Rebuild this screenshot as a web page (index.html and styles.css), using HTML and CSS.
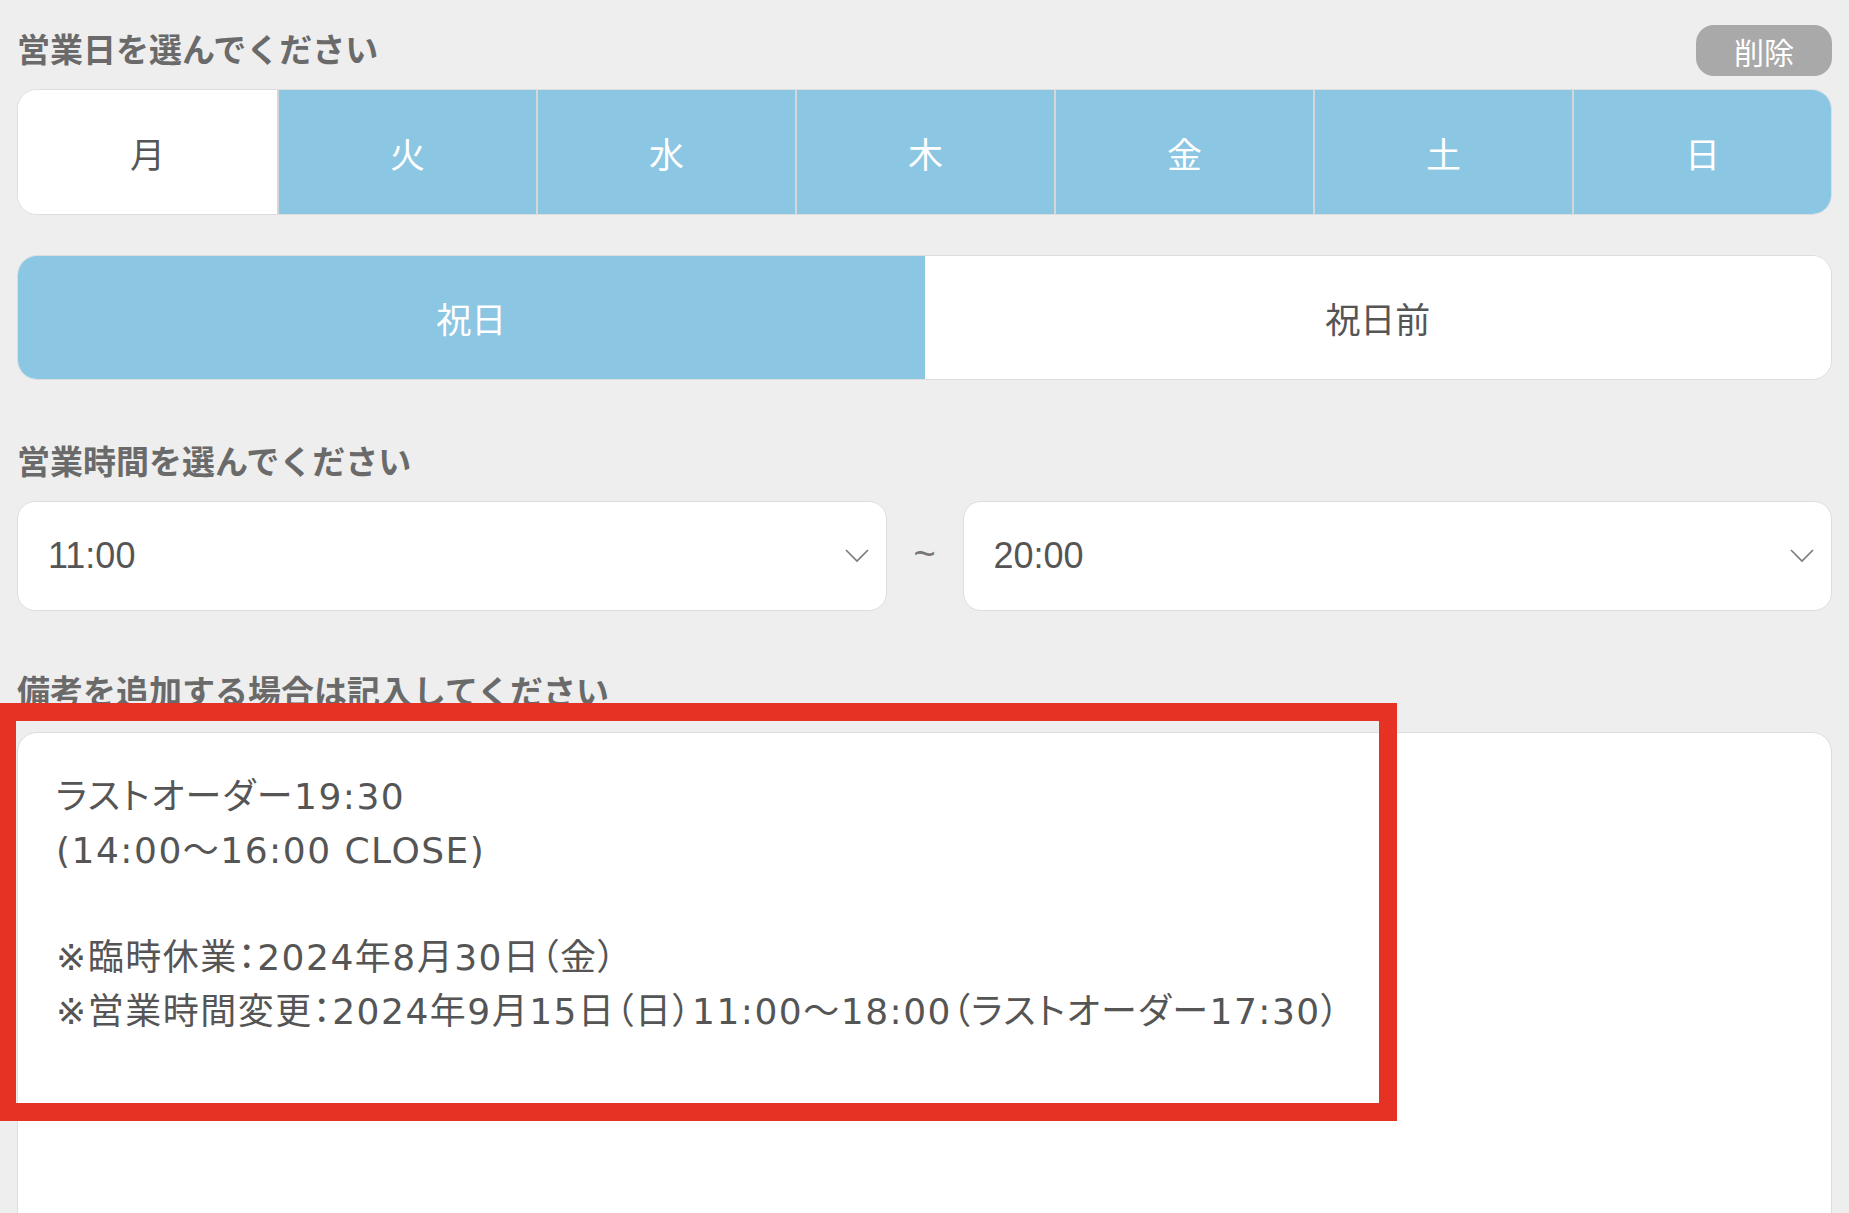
FILE: index.html
```html
<!DOCTYPE html>
<html lang="ja">
<head>
    <meta charset="UTF-8">
    <meta name="viewport" content="width=device-width, initial-scale=1.0">
    <title>営業日設定</title>
    <link rel="stylesheet" href="styles.css">
</head>
<body>
    <div class="page">
        <div class="head">
            <p class="label">営業日を選んでください</p>
            <div class="delete-btn">削除</div>
        </div>

        <div class="days">
            <div class="day">月</div>
            <div class="day on">火</div>
            <div class="day on">水</div>
            <div class="day on">木</div>
            <div class="day on">金</div>
            <div class="day on">土</div>
            <div class="day on">日</div>
        </div>

        <div class="holidays">
            <div class="day on">祝日</div>
            <div class="day">祝日前</div>
        </div>

        <p class="label label-time">営業時間を選んでください</p>
        <div class="times">
            <div class="select">
                <span>11:00</span>
                <svg class="chevron" width="24" height="14" viewBox="0 0 24 14"><polyline points="1,1 12,12 23,1" fill="none" stroke="#7a7a7a" stroke-width="1.6"/></svg>
            </div>
            <div class="tilde">~</div>
            <div class="select">
                <span>20:00</span>
                <svg class="chevron" width="24" height="14" viewBox="0 0 24 14"><polyline points="1,1 12,12 23,1" fill="none" stroke="#7a7a7a" stroke-width="1.6"/></svg>
            </div>
        </div>

        <p class="label label-note">備考を追加する場合は記入してください</p>
        <div class="note">
            <p>ラストオーダー19:30</p>
            <p>(14:00～16:00 CLOSE)</p>
            <p>&nbsp;</p>
            <p>※臨時休業：2024年8月30日（金）</p>
            <p>※営業時間変更：2024年9月15日（日）11:00～18:00（ラストオーダー17:30）</p>
        </div>

        <!-- 注釈の赤枠 -->
        <div class="mark"></div>
    </div>
</body>
</html>
```

FILE: styles.css
```css
body {
    margin: 0;
    background-color: #eeeeee;
    font-family: "Noto Sans CJK JP", "Noto Sans", sans-serif;
    color: #555555;
}

.page {
    position: relative;
    height: 1213px;
    overflow: hidden;
    padding: 25px 17px 0 17px;
    box-sizing: border-box;
}

p {
    margin: 0;
}

.head {
    display: flex;
    justify-content: space-between;
    align-items: flex-start;
    height: 51px;
}

.label {
    font-size: 33px;
    font-weight: bold;
    line-height: 40px;
    color: #6a6a6a;
}

.head .label {
    margin-top: 3px;
}

.delete-btn {
    width: 136px;
    height: 51px;
    border-radius: 18px;
    background-color: #a9a9a9;
    color: #ffffff;
    font-size: 30px;
    display: flex;
    justify-content: center;
    align-items: center;
}

.days, .holidays {
    display: grid;
    border: 1px solid #dddddd;
    border-radius: 20px;
    overflow: hidden;
    background-color: #ffffff;
}

.days {
    grid-template-columns: repeat(7, 1fr);
    height: 126px;
    margin-top: 13px;
    box-sizing: border-box;
}

.holidays {
    grid-template-columns: 1fr 1fr;
    height: 125px;
    margin-top: 40px;
    box-sizing: border-box;
}

.day {
    display: flex;
    justify-content: center;
    align-items: center;
    font-size: 35px;
    color: #555555;
    background-color: #ffffff;
}

.days .day + .day {
    border-left: 2px solid #d6d6d6;
}

.day.on {
    background-color: #8bc6e3;
    color: #ffffff;
}

.label-time {
    margin-top: 60px;
}

.times {
    display: grid;
    grid-template-columns: 1fr 76px 1fr;
    height: 110px;
    margin-top: 21px;
}

.select {
    display: flex;
    align-items: center;
    justify-content: space-between;
    background-color: #ffffff;
    border: 1px solid #dddddd;
    border-radius: 18px;
    padding: 0 17px 0 30px;
    font-family: "Liberation Sans", Arial, sans-serif;
    font-size: 36px;
    color: #555555;
}

.chevron {
    display: block;
}

.tilde {
    display: flex;
    justify-content: center;
    align-items: center;
    font-family: "Liberation Sans", Arial, sans-serif;
    font-size: 38px;
    color: #777777;
    padding-bottom: 4px;
}

.label-note {
    margin-top: 59px;
}

.note {
    margin-top: 22px;
    height: 620px;
    background-color: #ffffff;
    border: 1px solid #dddddd;
    border-radius: 20px;
    padding: 37px 38px;
    font-family: "DejaVu Sans", "Noto Sans CJK JP", sans-serif;
    font-feature-settings: "palt";
    font-size: 36px;
    letter-spacing: 1.5px;
    line-height: 53.7px;
    color: #555555;
}

.mark {
    position: absolute;
    left: -2px;
    top: 703px;
    width: 1399px;
    height: 418px;
    border: 18px solid #e63125;
    box-sizing: border-box;
}
```
